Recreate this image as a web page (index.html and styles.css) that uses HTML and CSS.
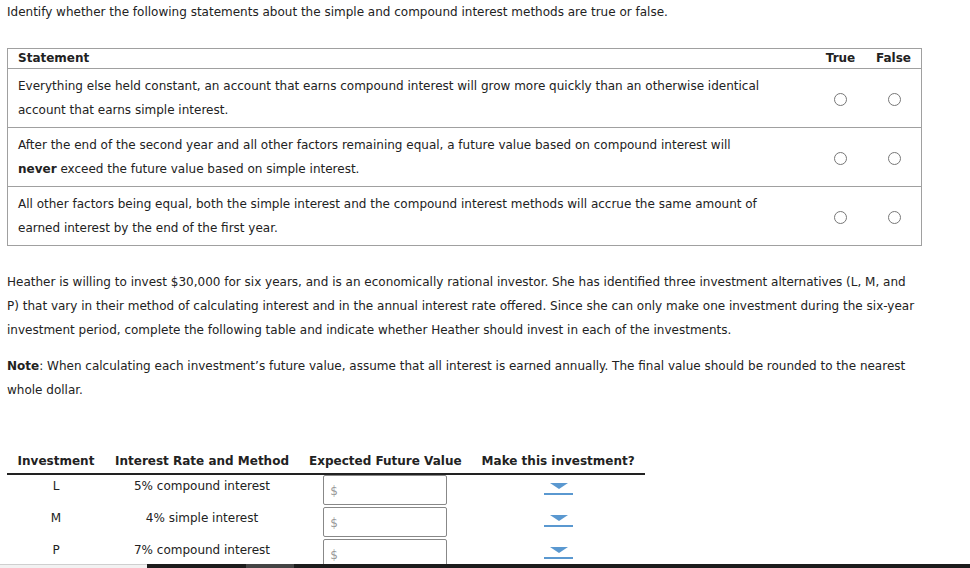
FILE: index.html
```html
<!DOCTYPE html>
<html>
<head>
<meta charset="utf-8">
<link rel="stylesheet" href="styles.css">
</head>
<body>
<p class="intro">Identify whether the following statements about the simple and compound interest methods are true or false.</p>
<table class="tf">
  <thead>
    <tr><th class="stmt">Statement</th><th class="opt">True</th><th class="opt last">False</th></tr>
  </thead>
  <tbody>
    <tr>
      <td class="stmt">Everything else held constant, an account that earns compound interest will grow more quickly than an otherwise identical account that earns simple interest.</td>
      <td class="opt"><span class="radio"></span></td>
      <td class="opt last"><span class="radio"></span></td>
    </tr>
    <tr>
      <td class="stmt">After the end of the second year and all other factors remaining equal, a future value based on compound interest will <b>never</b> exceed the future value based on simple interest.</td>
      <td class="opt"><span class="radio"></span></td>
      <td class="opt last"><span class="radio"></span></td>
    </tr>
    <tr>
      <td class="stmt">All other factors being equal, both the simple interest and the compound interest methods will accrue the same amount of earned interest by the end of the first year.</td>
      <td class="opt"><span class="radio"></span></td>
      <td class="opt last"><span class="radio"></span></td>
    </tr>
  </tbody>
</table>
<p class="para first">Heather is willing to invest $30,000 for six years, and is an economically rational investor. She has identified three investment alternatives (L, M, and P) that vary in their method of calculating interest and in the annual interest rate offered. Since she can only make one investment during the six-year investment period, complete the following table and indicate whether Heather should invest in each of the investments.</p>
<p class="para"><b>Note</b>: When calculating each investment’s future value, assume that all interest is earned annually. The final value should be rounded to the nearest whole dollar.</p>
<table class="inv">
  <thead>
    <tr><th class="c1">Investment</th><th class="c2">Interest Rate and Method</th><th class="c3">Expected Future Value</th><th class="c4">Make this investment?</th></tr>
  </thead>
  <tbody>
    <tr><td>L</td><td>5% compound interest</td><td><span class="money">$</span></td><td><span class="dd"><span class="tri"></span></span></td></tr>
    <tr><td>M</td><td>4% simple interest</td><td><span class="money">$</span></td><td><span class="dd"><span class="tri"></span></span></td></tr>
    <tr><td>P</td><td>7% compound interest</td><td><span class="money">$</span></td><td><span class="dd"><span class="tri"></span></span></td></tr>
  </tbody>
</table>
<div class="scrollbar"><span class="sb-track"></span><span class="sb-dark"></span><span class="sb-thumb"></span><span class="sb-rest"></span></div>
</body>
</html>
```
FILE: styles.css
```css
html, body {
  margin: 0;
  padding: 0;
  background: #fff;
}
body {
  font-family: "DejaVu Sans", Verdana, sans-serif;
  font-size: 12px;
  color: #222;
  padding: 0 7px;
  height: 568px;
  overflow: hidden;
}
.intro {
  margin: 0;
  padding-top: 1px;
  line-height: 22px;
}
.tf {
  margin-top: 25px;
  width: 915px;
  border-collapse: collapse;
  border: 1px solid #a0a0a0;
}
.tf th {
  font-weight: bold;
  height: 19px;
  padding: 0;
  line-height: 17px;
  vertical-align: middle;
  border-bottom: 1px solid #a0a0a0;
}
.tf th.stmt, .tf td.stmt {
  text-align: left;
  padding-left: 10px;
}
.tf td.stmt {
  line-height: 24px;
  padding-top: 5px;
  padding-bottom: 5px;
  padding-right: 50px;
  border-bottom: 1px solid #a0a0a0;
}
.tf .opt {
  width: 55px;
  text-align: center;
  border-bottom: 1px solid #a0a0a0;
  vertical-align: middle;
}
.tf .opt.last {
  width: 48px;
  padding-right: 3px;
}
.radio {
  display: inline-block;
  width: 11px;
  height: 11px;
  border: 1px solid #777;
  border-radius: 50%;
  vertical-align: middle;
  margin-top: 2px;
}
.para {
  margin: 0;
  line-height: 24px;
  width: 910px;
}
.para.first {
  margin-top: 24px;
  margin-bottom: 12px;
}
.inv {
  margin-top: 48px;
  border-collapse: collapse;
}
.inv th {
  font-weight: bold;
  padding: 0 10px;
  height: 22px;
  line-height: 23px;
  border-bottom: 2px solid #222;
  text-align: center;
  white-space: nowrap;
}
.inv th.c1 { width: 78px; }
.inv th.c2 { width: 174px; }
.inv th.c3 { width: 152px; }
.inv th.c4 { width: 152px; }
.inv td {
  text-align: center;
  height: 32px;
  padding: 0;
  vertical-align: top;
  line-height: 23px;
}
.money {
  display: block;
  margin: 0 auto;
  width: 116px;
  height: 28px;
  border: 1px solid #888;
  border-radius: 2px;
  text-align: left;
  padding-left: 6px;
  line-height: 30px;
  color: #9a9a9a;
  font-size: 12px;
}
.dd {
  display: block;
  margin: 7px auto 0;
  width: 29px;
  height: 11px;
  border-bottom: 2px solid #5a98d0;
  position: relative;
}
.tri {
  position: absolute;
  left: 6px;
  top: 1px;
  width: 0;
  height: 0;
  border-left: 9px solid transparent;
  border-right: 9px solid transparent;
  border-top: 6px solid #5a98d0;
}
.scrollbar {
  position: fixed;
  left: 0;
  right: 0;
  bottom: 0;
  height: 4px;
  display: flex;
}
.sb-track { width: 147px; background: #f2f2f2; border-top: 1px solid #cfcfcf; }
.sb-dark { width: 99px; background: #1c1c1c; }
.sb-thumb { width: 48px; background: #444; }
.sb-rest { flex: 1; background: #1c1c1c; }
```
